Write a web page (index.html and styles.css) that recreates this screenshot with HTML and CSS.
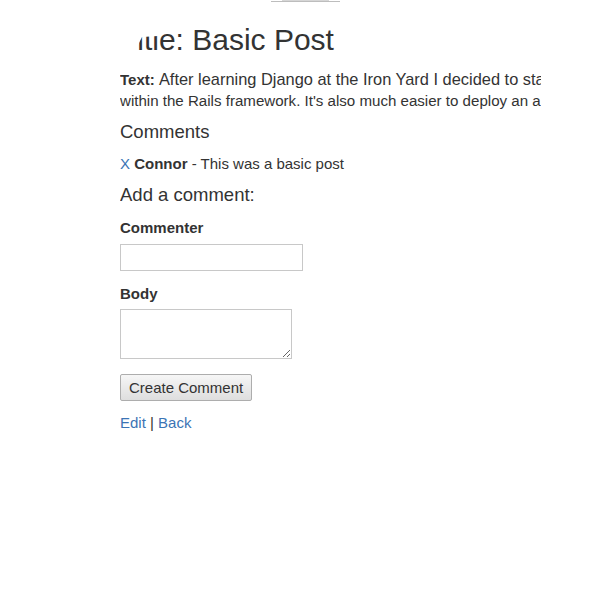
FILE: index.html
```html
<!DOCTYPE html>
<html>
<head>
<meta charset="utf-8">
<link rel="stylesheet" href="styles.css">
</head>
<body>
<div class="topbar"><div class="thumb"></div></div>
<main class="page">
  <h1 class="title">Title: Basic Post</h1>
  <p class="text"><strong>Text:</strong> <span class="line-one">After learning Django at the Iron Yard I decided to start building</span><br>within the Rails framework. It's also much easier to deploy an app with Heroku.</p>
  <h2 class="heading">Comments</h2>
  <p class="comment"><a href="#" class="link">X</a> <strong>Connor</strong> - This was a basic post</p>
  <h2 class="heading">Add a comment:</h2>
  <form class="form">
    <label class="label">Commenter</label>
    <input class="input" type="text">
    <label class="label label-body">Body</label>
    <textarea class="area"></textarea>
    <button class="btn" type="button">Create Comment</button>
  </form>
  <p class="links"><a href="#" class="link">Edit</a> | <a href="#" class="link">Back</a></p>
</main>
</body>
</html>
```
FILE: styles.css
```css
html, body { margin: 0; padding: 0; background: #fff; }
body {
  font-family: "Liberation Sans", Arial, sans-serif;
  font-size: 15px;
  line-height: 21px;
  color: #333;
}
.topbar {
  margin-left: 271px;
  width: 69px;
  height: 1px;
  border-bottom: 1px solid #bdbdbd;
  display: flex;
  justify-content: center;
}
.thumb { width: 47px; height: 1px; background: #d6d6d6; }
.page {
  margin-left: 120px;
  width: 421px;
  overflow: hidden;
  padding-top: 20px;
}
.title {
  margin: 0;
  font-size: 30px;
  font-weight: normal;
  line-height: 36px;
  clip-path: polygon(18px 100%, 18px 23px, 22px 15px, 38px 14px, 38px 0, 100% 0, 100% 100%);
}
.text { margin: 11px 0 0; white-space: nowrap; font-size: 15.1px; }
.text strong { font-size: 15px; }
.line-one { font-size: 16.4px; }
.heading {
  margin: 9px 0 0;
  font-size: 18.5px;
  font-weight: normal;
  line-height: 24px;
}
.comment { margin: 9px 0 0; }
.link { color: #3b74b5; text-decoration: none; }
.form { display: flex; flex-direction: column; align-items: flex-start; margin-top: 10px; }
.label { font-weight: bold; display: block; margin-bottom: 6px; }
.label-body { margin-bottom: 5px; }
.input {
  width: 183px; height: 27px; box-sizing: border-box;
  border: 1px solid #c8c8c8; margin: 0 0 12px; padding: 0;
}
.area {
  width: 172px; height: 50px; box-sizing: border-box;
  border: 1px solid #c8c8c8; margin: 0 0 15px; padding: 0;
}
.btn {
  font-family: "Liberation Sans", Arial, sans-serif;
  font-size: 15px; color: #333;
  height: 27px; padding: 0 8px;
  border: 1px solid #adadad; border-radius: 2px;
  background: linear-gradient(#f6f6f6, #dedede);
}
.links { margin: 11px 0 0; }
```
